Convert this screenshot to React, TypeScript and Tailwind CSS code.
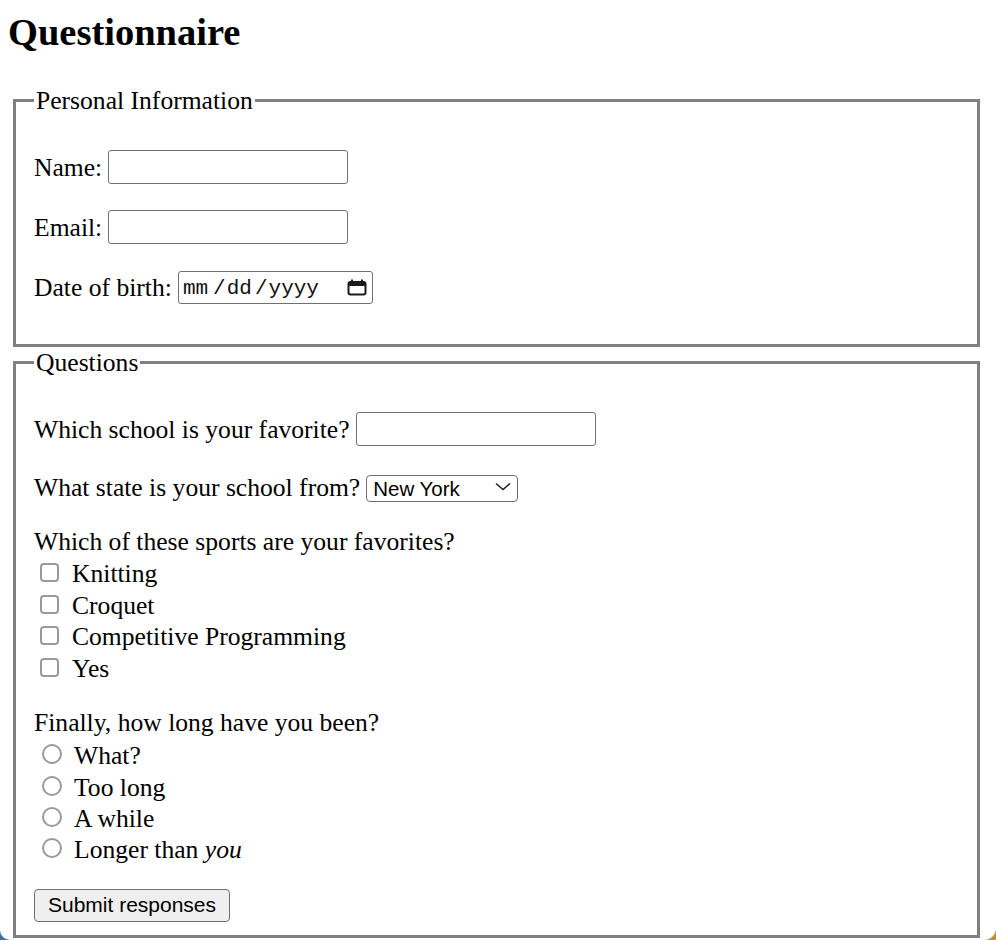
import React from "react";

function Row({ label, children }: { label: string; children: React.ReactNode }) {
  return (
    <div className="flex items-center gap-[6px] h-[34px]">
      <span className="whitespace-nowrap">{label}</span>
      {children}
    </div>
  );
}

function TextInput() {
  return (
    <input
      type="text"
      className="w-[240px] h-[34px] border border-[#6f6f6f] rounded-[3px] bg-white px-[3px] text-[21px] font-['Liberation_Sans',sans-serif] outline-none"
    />
  );
}

function DateInput() {
  return (
    <div className="w-[195px] h-[33px] border border-[#6f6f6f] rounded-[3px] bg-white flex items-center pl-[4px] pt-[3px] font-['Liberation_Mono',monospace] text-[21px] leading-[24px] text-[#111]">
      <span>mm</span>
      <span className="ml-[5px]">/</span>
      <span className="ml-[1px]">dd</span>
      <span className="ml-[3px]">/</span>
      <span className="ml-[1px]">yyyy</span>
      <svg className="ml-auto mr-[5px] -mt-[3px]" width="20" height="17" viewBox="0 0 20 17" fill="none">
        <rect x="1.5" y="3" width="17" height="12.5" rx="2" stroke="#1a1a1a" strokeWidth="2" />
        <rect x="1.5" y="3" width="17" height="4" fill="#1a1a1a" />
        <line x1="5" y1="0.5" x2="5" y2="4" stroke="#1a1a1a" strokeWidth="2" />
        <line x1="15" y1="0.5" x2="15" y2="4" stroke="#1a1a1a" strokeWidth="2" />
      </svg>
    </div>
  );
}

const sports = ["Knitting", "Croquet", "Competitive Programming", "Yes"];

function Radio() {
  return (
    <input
      type="radio"
      name="howlong"
      className="appearance-none inline-block align-baseline w-[20px] h-[20px] ml-[8px] mr-[12px] border-2 border-[#9a9a9a] rounded-full bg-white"
    />
  );
}

export default function App() {
  return (
    <div className="relative min-h-[940px] overflow-hidden bg-white text-black font-['Liberation_Serif',serif] text-[25.6px] leading-[29px]">
      <div className="pt-[10px] pl-[8px]">
        <h2 className="text-[38.5px] leading-[44px] font-bold">Questionnaire</h2>
        <form className="mt-[32px] ml-[5px]" onSubmit={(e) => e.preventDefault()}>
          <fieldset className="w-[967px] border-[3px] border-[#808080] px-[18px] pb-[40px]">
            <legend className="px-[2px] leading-[29px]">Personal Information</legend>
            <div className="pt-[35px] flex flex-col gap-[26px]">
              <Row label="Name:">
                <TextInput />
              </Row>
              <Row label="Email:">
                <TextInput />
              </Row>
              <Row label="Date of birth:">
                <DateInput />
              </Row>
            </div>
          </fieldset>

          <fieldset className="mt-[1px] w-[967px] border-[3px] border-[#808080] px-[18px] pb-[13px]">
            <legend className="px-[2px] leading-[29px]">Questions</legend>
            <div className="pt-[35px]">
              <Row label="Which school is your favorite?">
                <TextInput />
              </Row>
              <div className="mt-[28px] flex items-center gap-[6px] h-[27px]">
                <span className="whitespace-nowrap">What state is your school from?</span>
                <div className="relative">
                  <select className="appearance-none w-[152px] h-[27px] border border-[#6f6f6f] rounded-[4px] bg-white pl-[6px] text-[20.5px] leading-[25px] font-['Liberation_Sans',sans-serif] text-black outline-none">
                    <option>New York</option>
                    <option>California</option>
                    <option>Texas</option>
                  </select>
                  <svg
                    className="absolute right-[7px] top-[9px] pointer-events-none"
                    width="16"
                    height="9"
                    viewBox="0 0 16 9"
                    fill="none"
                  >
                    <path d="M1 1.5L8 7.5L15 1.5" stroke="#222" strokeWidth="1.6" />
                  </svg>
                </div>
              </div>

              <div className="mt-[25px] leading-[31px]">Which of these sports are your favorites?</div>
              <div className="mt-[1px]">
                {sports.map((s) => (
                  <label key={s} className="block leading-[31.6px]">
                    <input
                      type="checkbox"
                      className="appearance-none inline-block align-baseline w-[19px] h-[19px] ml-[6px] mr-[13px] mb-0 border-2 border-[#9a9a9a] rounded-[4px] bg-white"
                    />
                    {s}
                  </label>
                ))}
              </div>

              <div className="mt-[23px] leading-[31px]">Finally, how long have you been?</div>
              <div className="mt-[2px]">
                {["What?", "Too long", "A while"].map((s) => (
                  <label key={s} className="block leading-[31.3px]">
                    <Radio />
                    {s}
                  </label>
                ))}
                <label className="block leading-[31.3px]">
                  <Radio />
                  Longer than <em className="italic">you</em>
                </label>
              </div>

              <button
                type="submit"
                className="mt-[23px] w-[196px] h-[33px] border border-[#6f6f6f] rounded-[4px] bg-[#efefef] font-['Liberation_Sans',sans-serif] text-[21px] leading-[24px] text-black"
              >
                Submit responses
              </button>
            </div>
          </fieldset>
        </form>
      </div>

      <div className="absolute right-0 bottom-0 w-[12px] h-[14px] bg-[#c98a2e]">
        <div className="w-full h-full bg-white rounded-br-[12px]" />
      </div>
      <div className="absolute left-0 bottom-0 w-[12px] h-[10px] bg-[#3a6ea5]">
        <div className="w-full h-full bg-white rounded-bl-[12px]" />
      </div>
    </div>
  );
}
